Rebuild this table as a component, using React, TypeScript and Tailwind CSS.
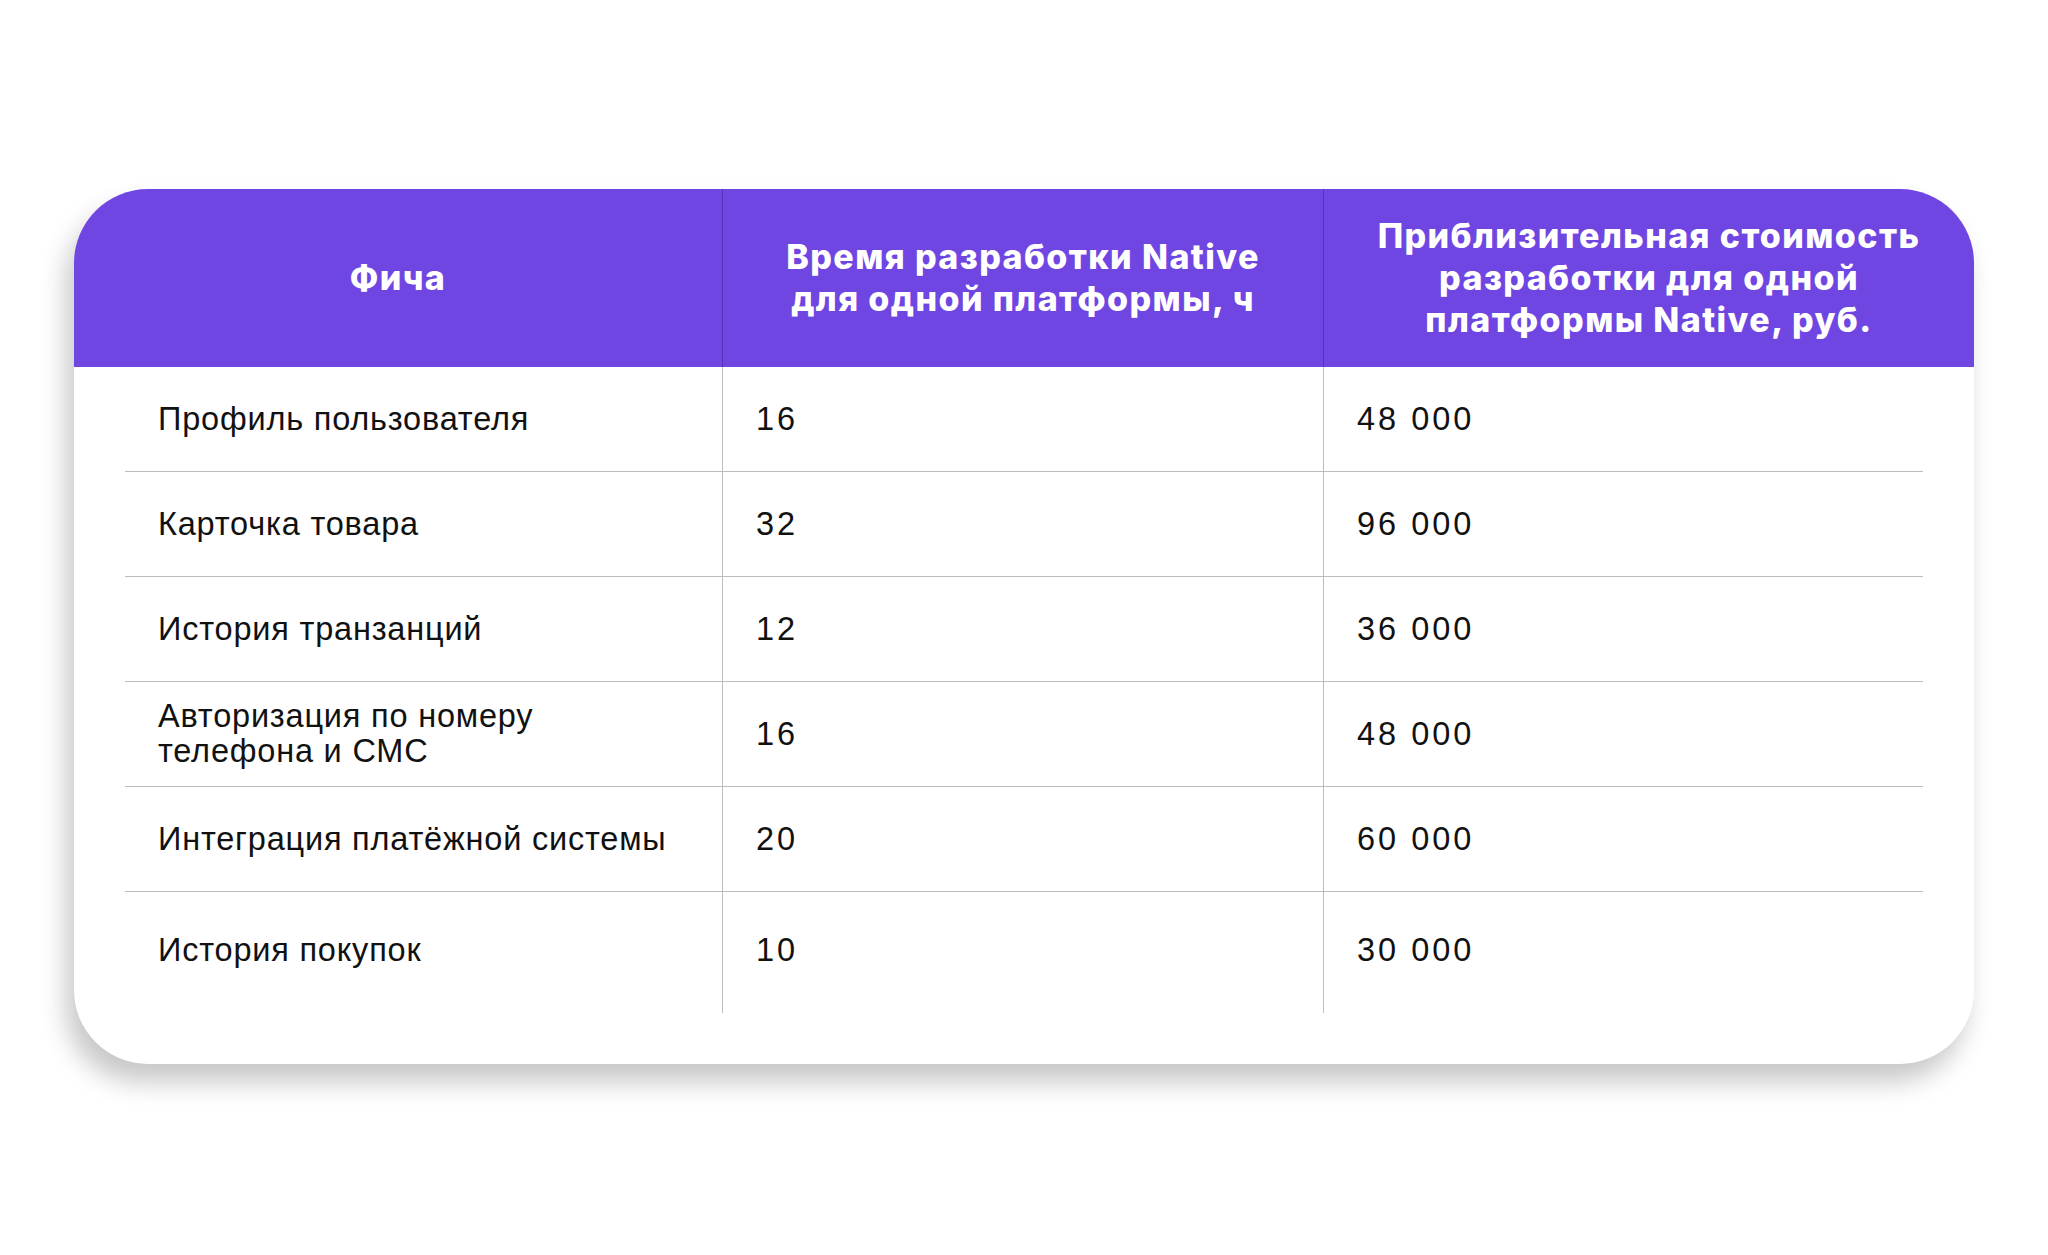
const ROWS = [
  { feature: 'Профиль пользователя', hours: '16', cost: '48 000' },
  { feature: 'Карточка товара', hours: '32', cost: '96 000' },
  { feature: 'История транзанций', hours: '12', cost: '36 000' },
  { feature: 'Авторизация по номеру\nтелефона и СМС', hours: '16', cost: '48 000' },
  { feature: 'Интеграция платёжной системы', hours: '20', cost: '60 000' },
  { feature: 'История покупок', hours: '10', cost: '30 000' },
];

export default function App() {
  return (
    <div className="min-h-[1255px] w-full bg-white pt-[189px]">
      <div className="mx-auto w-[1900px] overflow-hidden rounded-[74px] bg-white shadow-[-8px_18px_26px_rgba(0,0,0,0.22)]">
        {/* header */}
        <div
          className="grid h-[178px] grid-cols-[648px_601px_1fr] bg-[#6f46e2] text-center text-[34px] font-extrabold leading-[42px] tracking-[1.4px] text-white"
          style={{ fontFamily: 'Inter, "Noto Sans", sans-serif' }}
        >
          <div className="flex items-center justify-center">Фича</div>
          <div className="flex items-center justify-center border-l border-[#5733b9]">
            <span>
              Время разработки Native
              <br />
              для одной платформы, ч
            </span>
          </div>
          <div className="flex items-center justify-center border-l border-[#5733b9]">
            <span>
              Приблизительная стоимость
              <br />
              разработки для одной
              <br />
              платформы Native, руб.
            </span>
          </div>
        </div>

        {/* body */}
        <div
          className="px-[51px] pb-[51px] text-[32.5px] leading-[35px] tracking-[0.8px] text-[#111]"
          style={{ fontFamily: '"Liberation Sans", Arial, sans-serif' }}
        >
          {ROWS.map((r, i) => {
            const last = i === ROWS.length - 1;
            return (
              <div
                key={i}
                className={
                  last
                    ? 'grid h-[121px] grid-cols-[597px_601px_1fr] pb-[5px]'
                    : 'grid h-[105px] grid-cols-[597px_601px_1fr] border-b border-[#bdbdbd]'
                }
              >
                <div className="flex items-center whitespace-pre-line pl-[33px]">{r.feature}</div>
                <div className="-mb-[5px] flex items-center border-l border-[#bdbdbd] pb-[5px] pl-[33px] tracking-[3px]">
                  {r.hours}
                </div>
                <div className="-mb-[5px] flex items-center border-l border-[#bdbdbd] pb-[5px] pl-[33px] tracking-[3px]">
                  {r.cost}
                </div>
              </div>
            );
          })}
        </div>
      </div>
    </div>
  );
}
